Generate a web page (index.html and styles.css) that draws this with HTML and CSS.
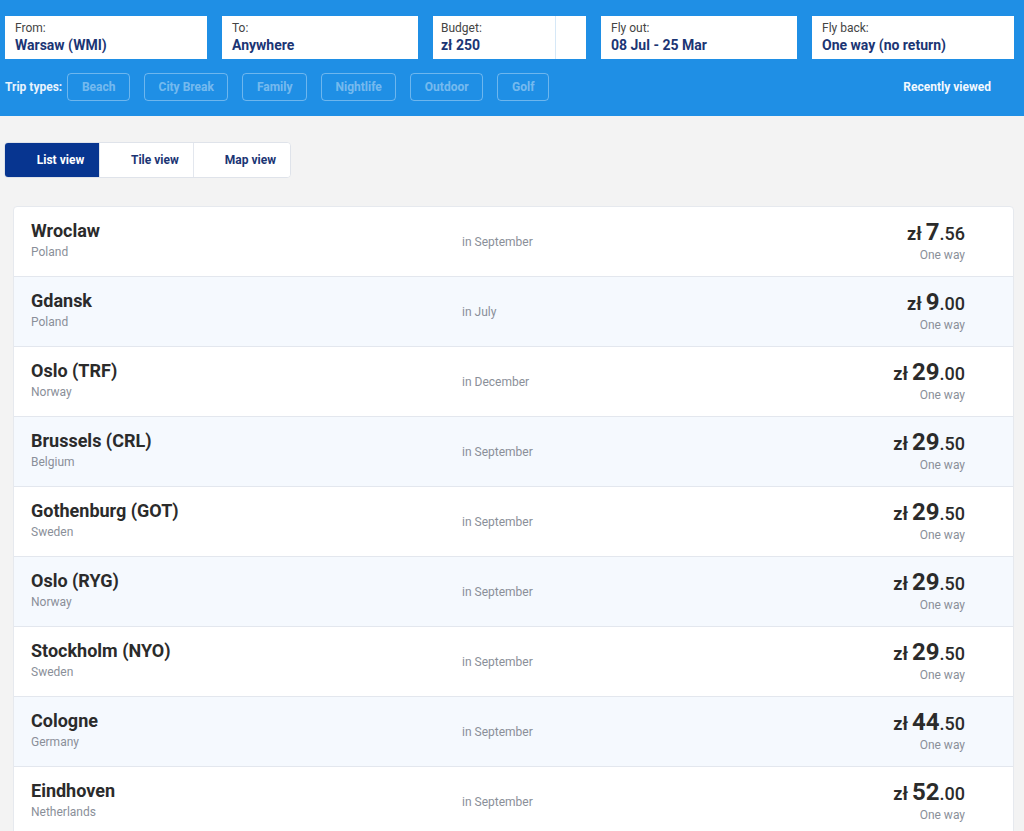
FILE: index.html
```html
<!DOCTYPE html>
<html lang="en">
<head>
  <meta charset="UTF-8">
  <meta name="viewport" content="width=device-width, initial-scale=1.0">
  <title>Fare Finder</title>
  <link rel="stylesheet" href="styles.css">
</head>
<body>
  <!-- Search header -->
  <header class="search">
    <div class="fields">
      <div class="field field-from">
        <span class="label">From:</span>
        <span class="value">Warsaw (WMI)</span>
      </div>
      <div class="field field-to">
        <span class="label">To:</span>
        <span class="value">Anywhere</span>
      </div>
      <div class="field field-budget">
        <div class="budget-main">
          <span class="label">Budget:</span>
          <span class="value">zł 250</span>
        </div>
        <div class="budget-side"></div>
      </div>
      <div class="field field-out">
        <span class="label">Fly out:</span>
        <span class="value">08 Jul - 25 Mar</span>
      </div>
      <div class="field field-back">
        <span class="label">Fly back:</span>
        <span class="value">One way (no return)</span>
      </div>
    </div>

    <div class="trip-row">
      <span class="trip-label">Trip types:</span>
      <div class="trip-types">
        <button class="trip w-beach">Beach</button>
        <button class="trip w-city">City Break</button>
        <button class="trip w-family">Family</button>
        <button class="trip w-night">Nightlife</button>
        <button class="trip w-outdoor">Outdoor</button>
        <button class="trip w-golf">Golf</button>
      </div>
      <a class="recent" href="#">Recently viewed</a>
    </div>
  </header>

  <main class="content">
    <!-- View switcher -->
    <div class="views">
      <button class="view active">List view</button>
      <button class="view">Tile view</button>
      <button class="view">Map view</button>
    </div>

    <!-- Results -->
    <div class="results" id="results"></div>
  </main>

  <script>
    const fares = [
      { city: 'Wroclaw', country: 'Poland', when: 'in September', price: '7.56' },
      { city: 'Gdansk', country: 'Poland', when: 'in July', price: '9.00' },
      { city: 'Oslo (TRF)', country: 'Norway', when: 'in December', price: '29.00' },
      { city: 'Brussels (CRL)', country: 'Belgium', when: 'in September', price: '29.50' },
      { city: 'Gothenburg (GOT)', country: 'Sweden', when: 'in September', price: '29.50' },
      { city: 'Oslo (RYG)', country: 'Norway', when: 'in September', price: '29.50' },
      { city: 'Stockholm (NYO)', country: 'Sweden', when: 'in September', price: '29.50' },
      { city: 'Cologne', country: 'Germany', when: 'in September', price: '44.50' },
      { city: 'Eindhoven', country: 'Netherlands', when: 'in September', price: '52.00' }
    ];

    const results = document.getElementById('results');

    fares.forEach((fare) => {
      const [whole, cents] = fare.price.split('.');
      const row = document.createElement('div');
      row.className = 'fare';
      row.innerHTML = `
        <div class="place">
          <div class="city">${fare.city}</div>
          <div class="country">${fare.country}</div>
        </div>
        <div class="when">${fare.when}</div>
        <div class="price">
          <div class="amount"><span class="cur">zł</span> <span class="whole">${whole}</span><span class="cents">.${cents}</span></div>
          <div class="trip-kind">One way</div>
        </div>
      `;
      results.appendChild(row);
    });
  </script>
</body>
</html>
```

FILE: styles.css
```css
body {
  margin: 0;
  padding: 0;
  font-family: Roboto, "Liberation Sans", Arial, sans-serif;
  background-color: #f3f3f3;
  color: #333;
}

button {
  font-family: inherit;
}

/* Header */

.search {
  background-color: #1f8fe5;
  padding: 16px 10px 0 5px;
  height: 100px;
}

.fields {
  display: flex;
  gap: 15px;
}

.field {
  background: white;
  height: 43px;
  box-sizing: border-box;
  padding: 5px 10px 0;
  display: flex;
  flex-direction: column;
}

.field-from { width: 202px; }
.field-to { width: 196px; }
.field-budget { width: 153px; flex-direction: row; padding: 0; }
.field-out { width: 196px; }
.field-back { flex: 1; }

.budget-main {
  flex: 1;
  padding: 5px 8px 0;
  display: flex;
  flex-direction: column;
  border-right: 1px solid #d6e8f7;
}

.budget-side {
  width: 30px;
}

.label {
  font-size: 12px;
  line-height: 15px;
  color: #444;
}

.value {
  font-size: 14px;
  font-weight: bold;
  line-height: 19px;
  color: #1b3574;
}

.trip-row {
  display: flex;
  align-items: center;
  margin-top: 14px;
}

.trip-label {
  color: #e8f3fd;
  font-size: 12px;
  font-weight: bold;
  margin-right: 5px;
}

.trip-types {
  display: flex;
  gap: 14px;
}

.trip {
  height: 28px;
  padding: 0;
  background: transparent;
  border: 1px solid rgba(255, 255, 255, 0.35);
  border-radius: 4px;
  color: rgba(255, 255, 255, 0.4);
  font-size: 12px;
  font-weight: bold;
}

.w-beach { width: 63px; }
.w-city { width: 84px; }
.w-family { width: 65px; }
.w-night { width: 75px; }
.w-outdoor { width: 73px; }
.w-golf { width: 52px; }

.recent {
  margin-left: auto;
  margin-right: 23px;
  color: #f2f8fe;
  font-size: 12px;
  font-weight: bold;
  text-decoration: none;
}

/* Content */

.content {
  padding: 26px 10px 0 4px;
}

.views {
  display: inline-flex;
  background: white;
  border: 1px solid #dfe3ea;
  border-radius: 4px;
  overflow: hidden;
  height: 36px;
  box-sizing: border-box;
}

.view {
  background: white;
  border: none;
  border-left: 1px solid #e3e7ee;
  padding: 0 14px 0 31px;
  font-size: 12px;
  font-weight: bold;
  color: #1b3574;
  cursor: pointer;
}

.view:first-child {
  border-left: none;
}

.view.active {
  background: #073590;
  color: white;
  width: 94px;
}

.results {
  margin: 28px 0 0 9px;
  background: white;
  border: 1px solid #e6e9ee;
  border-radius: 4px;
}

.fare {
  display: grid;
  grid-template-columns: 431px 1fr auto;
  align-items: center;
  height: 70px;
  box-sizing: border-box;
  padding: 0 48px 2px 17px;
  border-bottom: 1px solid #e3e7ee;
}

.fare:nth-child(even) {
  background: #f5f9fe;
}

.city {
  font-size: 18px;
  font-weight: bold;
  line-height: 22px;
  color: #2b2b2b;
}

.country {
  font-size: 12px;
  line-height: 18px;
  color: #8a8f99;
  margin-top: 1px;
}

.when {
  font-size: 12px;
  color: #8a8f99;
  margin-top: 2px;
}

.price {
  text-align: right;
}

.amount {
  color: #2b2b2b;
  font-weight: bold;
  line-height: 26px;
}

.cur {
  font-size: 18px;
}

.whole {
  font-size: 24px;
}

.cents {
  font-size: 18px;
  font-weight: 500;
}

.trip-kind {
  font-size: 12px;
  color: #8a8f99;
  line-height: 14px;
}
```
